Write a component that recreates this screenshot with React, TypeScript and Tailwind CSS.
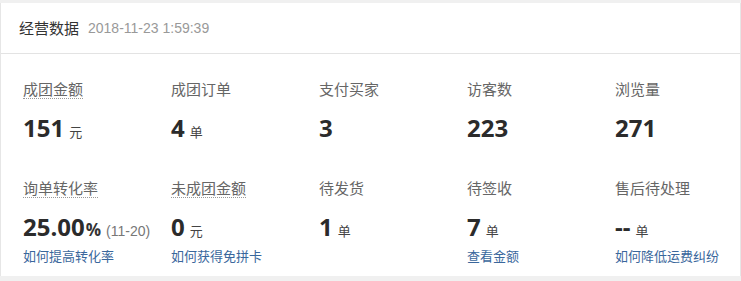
const stats = [
  { label: '成团金额', value: '151', unit: '元', dotted: true },
  { label: '成团订单', value: '4', unit: '单' },
  { label: '支付买家', value: '3' },
  { label: '访客数', value: '223' },
  { label: '浏览量', value: '271' },
];

const todo = [
  { label: '询单转化率', value: '25.00', unit: '%', extra: '(11-20)', link: '如何提高转化率', dotted: true },
  { label: '未成团金额', value: '0', unit: '元', link: '如何获得免拼卡', dotted: true },
  { label: '待发货', value: '1', unit: '单' },
  { label: '待签收', value: '7', unit: '单', link: '查看金额' },
  { label: '售后待处理', value: '--', unit: '单', link: '如何降低运费纠纷' },
];

type Item = { label: string; value: string; unit?: string; extra?: string; link?: string; dotted?: boolean };

const Stat = ({ item, withLink }: { item: Item; withLink?: boolean }) => (
  <div className="flex flex-col items-start">
    <span
      className={
        'text-[15px] leading-[19px] text-[#666] ' +
        (item.dotted ? 'border-b border-dotted border-[#999]' : 'border-b border-transparent')
      }
    >
      {item.label}
    </span>
    <div className="mt-[14px] h-[30px] flex items-baseline whitespace-nowrap">
      <span className="text-[24px] leading-[30px] font-bold text-[#2b2b2b] font-['Open_Sans',sans-serif]">
        {item.value}
      </span>
      {item.unit === '%' ? (
        <span className="text-[17px] font-bold text-[#333] ml-[1px] font-['Open_Sans',sans-serif]">%</span>
      ) : item.unit ? (
        <span className="text-[13px] text-[#444] ml-[5px]">{item.unit}</span>
      ) : null}
      {item.extra && <span className="text-[14px] text-[#777] ml-[5px] font-['Liberation_Sans',sans-serif]">{item.extra}</span>}
    </div>
    {withLink && (
      <a className="mt-[5px] h-[18px] text-[13px] leading-[18px] text-[#3a679c] cursor-pointer">{item.link ?? ''}</a>
    )}
  </div>
);

export default function App() {
  return (
    <div className="w-[741px] h-[281px] bg-[#f0f0f0] pt-[3px] font-['Noto_Sans_CJK_SC',sans-serif]">
      <div className="bg-white border-l border-r border-[#e6e6e6]">
        <div className="h-[51px] border-b border-[#e3e3e3] flex items-center pl-[18px] pt-[1px]">
          <span className="text-[15px] text-[#333]">经营数据</span>
          <span className="ml-[9px] text-[14px] text-[#999] font-['Liberation_Sans',sans-serif]">2018-11-23 1:59:39</span>
        </div>
        <div className="pl-[22px] pt-[25px] pb-[11px]">
          <div className="grid grid-cols-[148px_148px_148px_148px_148px]">
            {stats.map((s) => (
              <Stat key={s.label} item={s} />
            ))}
          </div>
          <div className="grid grid-cols-[148px_148px_148px_148px_148px] mt-[35px]">
            {todo.map((s) => (
              <Stat key={s.label} item={s} withLink />
            ))}
          </div>
        </div>
      </div>
    </div>
  );
}
